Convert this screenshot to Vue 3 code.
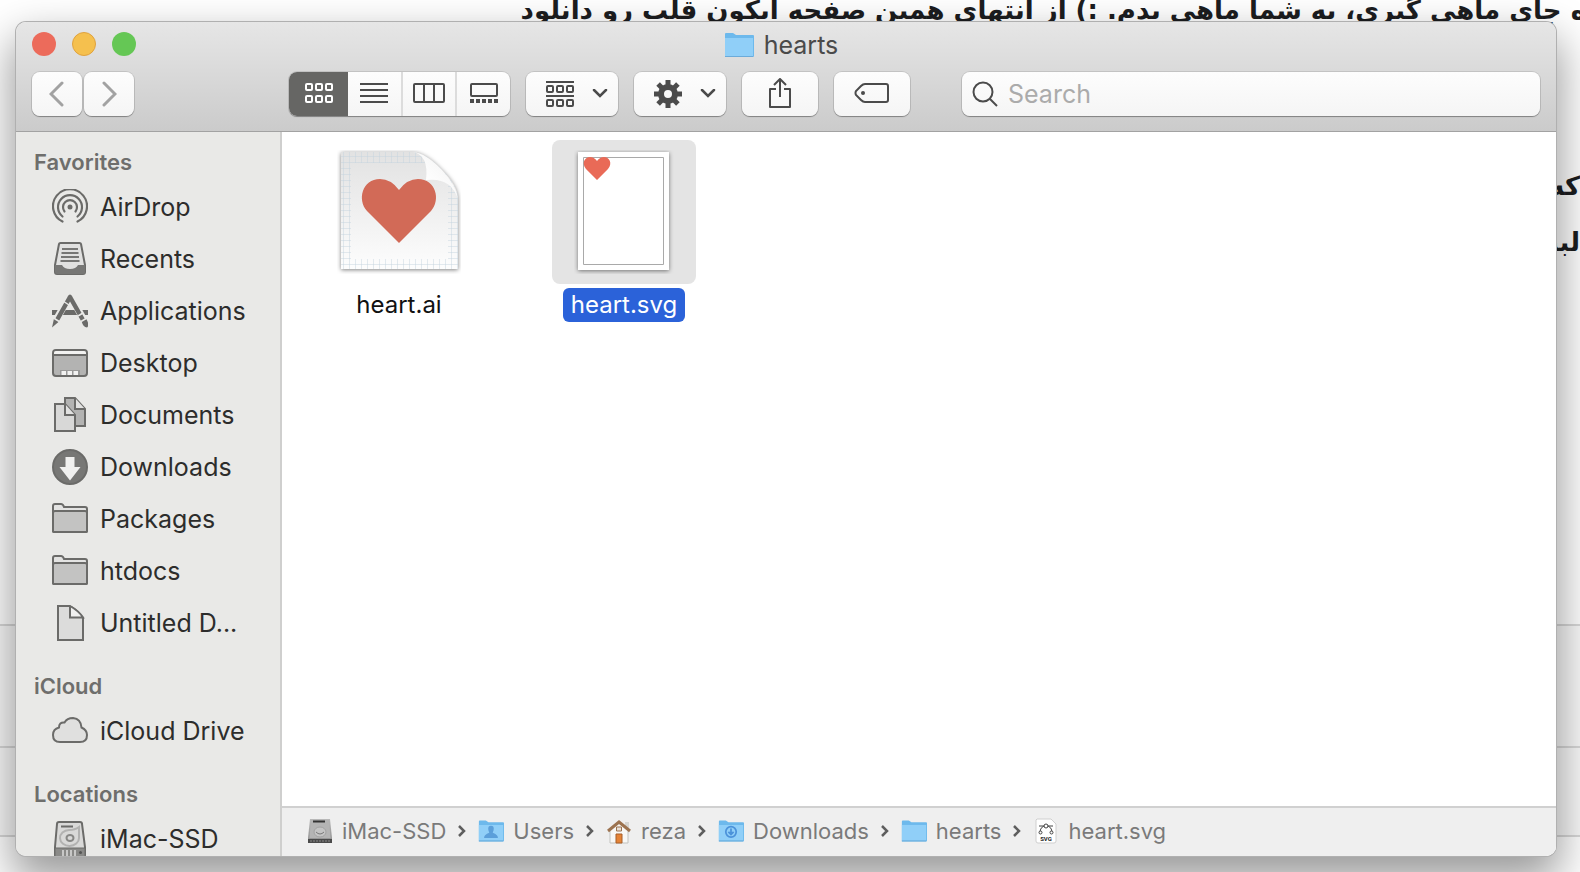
<script setup>
import { ref } from 'vue'

const query = ref('')
const view = ref('icons')

const views = [
  { id: 'icons', label: 'Icon view' },
  { id: 'list', label: 'List view' },
  { id: 'columns', label: 'Column view' },
  { id: 'gallery', label: 'Gallery view' },
]

const sections = [
  {
    title: 'Favorites',
    items: [
      { name: 'AirDrop', icon: 'airdrop' },
      { name: 'Recents', icon: 'recents' },
      { name: 'Applications', icon: 'applications' },
      { name: 'Desktop', icon: 'desktop' },
      { name: 'Documents', icon: 'documents' },
      { name: 'Downloads', icon: 'downloads' },
      { name: 'Packages', icon: 'folder' },
      { name: 'htdocs', icon: 'folder' },
      { name: 'Untitled D...', icon: 'file' },
    ],
  },
  { title: 'iCloud', items: [{ name: 'iCloud Drive', icon: 'cloud' }] },
  { title: 'Locations', items: [{ name: 'iMac-SSD', icon: 'disk' }] },
]

const path = [
  { name: 'iMac-SSD', icon: 'drive' },
  { name: 'Users', icon: 'users' },
  { name: 'reza', icon: 'home' },
  { name: 'Downloads', icon: 'down' },
  { name: 'hearts', icon: 'blue' },
  { name: 'heart.svg', icon: 'svgfile' },
]
</script>

<template>
  <svg class="defs" width="0" height="0" aria-hidden="true">
    <defs>
      <linearGradient id="paper" x1="0" y1="0" x2="0" y2="1">
        <stop offset="0" stop-color="#e2e2e2" /><stop offset="1" stop-color="#fdfdfd" />
      </linearGradient>
      <linearGradient id="curl" x1="0" y1="1" x2="1" y2="0">
        <stop offset="0" stop-color="#c8c8c8" /><stop offset=".3" stop-color="#ffffff" /><stop offset=".7" stop-color="#f7f7f7" /><stop offset="1" stop-color="#c4c4c4" />
      </linearGradient>
      <linearGradient id="metal" x1="0" y1="0" x2="0" y2="1">
        <stop offset="0" stop-color="#b9b9b9" /><stop offset="1" stop-color="#8e8e8e" />
      </linearGradient>
      <pattern id="grid" width="6" height="6" patternUnits="userSpaceOnUse">
        <path d="M0 .5H6M.5 0V6" stroke="#c3d3de" stroke-opacity=".45" fill="none" />
      </pattern>

      <symbol id="i-airdrop" viewBox="0 0 36 36">
        <g fill="none" stroke="#6b6b69" stroke-width="2.200" stroke-linecap="round">
          <path d="M10.500 32.500A17 17 0 1 1 25.500 32.500" />
          <path d="M10.500 27.500A12 12 0 1 1 25.500 27.500" />
          <path d="M12.500 22.500A7 7 0 1 1 23.500 22.500" />
        </g>
        <circle cx="18" cy="18" r="2.500" fill="#6b6b69" />
      </symbol>
      <symbol id="i-recents" viewBox="0 0 36 36">
        <path d="M7 3Q7.200 2 8.500 2H27.500Q28.800 2 29 3L33 24V31Q33 33 31 33H5Q3 33 3 31V24Z" fill="#e1e1e0" stroke="#6b6b69" stroke-width="2" stroke-linejoin="round" />
        <path d="M3 24H10Q12 28 18 28T26 24H33V32Q33 33 31 33H5Q3 33 3 31Z" fill="#777775" />
        <path d="M10 8H26M9.500 12H26.500M9 16H27M8.500 20H27.500" stroke="#777775" stroke-width="2" />
      </symbol>
      <symbol id="i-applications" viewBox="0 0 36 36">
        <path d="M0 17H36V22H0Z" fill="#6b6b69" />
        <path d="M17 4L3.500 28M19 4L32.500 28" stroke="#e9e9e7" stroke-width="7" />
        <path d="M18 4L5 27M18 4L31 27" stroke="#6b6b69" stroke-width="4.500" stroke-linecap="round" />
        <path d="M2 25.500L7 28.500L0 34.500ZM29.500 28L34 25.500Q38 32 35 34.500Q31 34 29.500 28Z" fill="#6b6b69" />
        <path d="M11 8L17 12M26 23L31 20M1.500 25L8 29M29 28.500L35 25" stroke="#e9e9e7" stroke-width="1.500" />
      </symbol>
      <symbol id="i-desktop" viewBox="0 0 36 36">
        <rect x="1" y="5" width="34" height="26" rx="3" fill="#b3b3b2" stroke="#6b6b69" stroke-width="2" />
        <path d="M2 8Q2 6 4 6H32Q34 6 34 8V9H2Z" fill="#f2f2f1" />
        <path d="M1 10H35" stroke="#6b6b69" stroke-width="2" />
        <path d="M8 25H28V30H8Z" fill="#999998" /><path d="M9.500 26H14V30H9.500ZM15.500 26H20V30H15.500ZM21.500 26H26V30H21.500Z" fill="#f2f2f1" />
      </symbol>
      <symbol id="i-documents" viewBox="0 0 36 36">
        <g stroke="#6b6b69" stroke-width="2">
          <path d="M13 1H23L33 12V29H13Z" fill="#b3b3b2" /><path d="M23 1V12H33" fill="#e2e2e1" />
          <path d="M3 7H13L23 18V34H3Z" fill="#d8d8d7" /><path d="M13 7V18H23" fill="#e2e2e1" />
        </g>
      </symbol>
      <symbol id="i-downloads" viewBox="0 0 36 36">
        <circle cx="18" cy="18" r="17" fill="#777775" stroke="#6b6b69" stroke-width="2" />
        <path d="M13.500 8H22.500V18H28.500L18 31.500L7.500 18H13.500Z" fill="#f0f0ef" />
      </symbol>
      <symbol id="i-folder" viewBox="0 0 36 36">
        <path d="M1 30V5Q1 3 3 3H9Q11 3 12 6H33Q35 6 35 8V30Q35 31 34 31H2Q1 31 1 30Z" fill="#e3e3e2" stroke="#6b6b69" stroke-width="2" />
        <path d="M1 12Q1 10 3 10H33Q35 10 35 12V30Q35 31 34 31H2Q1 31 1 30Z" fill="#c3c3c2" stroke="#6b6b69" stroke-width="2" />
      </symbol>
      <symbol id="i-file" viewBox="0 0 36 36">
        <path d="M6 1H17Q22 2 31 13V35H6Z" fill="#dcdcdb" stroke="#6b6b69" stroke-width="2" />
        <path d="M18 1V12.500H31Q27 6 18 1Z" fill="#f0f0ef" stroke="#6b6b69" stroke-width="2" />
      </symbol>
      <symbol id="i-cloud" viewBox="0 0 36 36">
        <path d="M8 29Q1 29 1 22Q1 16 7 14.500Q7 9 12.500 9.500Q15 5 21 5Q29 6 29.500 14.500Q35 17 35 22Q35 29 28 29Z" fill="#e0e0df" stroke="#6b6b69" stroke-width="2" />
      </symbol>
      <symbol id="i-disk" viewBox="0 0 36 36">
        <path d="M5 3Q5 1 7 1H28Q30 1 30 3L33 26V34Q33 36 31 36H5Q3 36 3 34V26Z" fill="#d9d9d8" stroke="#6b6b69" stroke-width="2" />
        <path d="M3 27H33V36H3Z" fill="#8a8a88" stroke="#6b6b69" stroke-width="1" />
        <path d="M9 5.500H21" stroke="#6b6b69" stroke-width="2" />
        <path d="M27 6V17A9.500 8 0 1 1 17 9Q23 9 27 6Z" fill="none" stroke="#b2b2b1" stroke-width="2" />
        <ellipse cx="18" cy="17" rx="3.500" ry="3" fill="none" stroke="#888886" stroke-width="2" />
        <path d="M11 29V35M15 29V35M19 29V35M23 29V35" stroke="#c8c8c7" stroke-width="2" /><circle cx="28.500" cy="31.500" r="1.500" fill="#555" />
      </symbol>

      <symbol id="i-blue" viewBox="0 0 30 26">
        <path d="M1 24V2Q1 1 2 1H9L12 3H29Q30 3 30 4V24Q30 25 29 25H1Z" fill="#6db9ec" />
        <path d="M1 6H29V24H1Z" fill="#90cff8" /><path d="M1 24.500H29" stroke="#6cabd9" />
      </symbol>
      <symbol id="i-users" viewBox="0 0 30 26">
        <use href="#i-blue" width="30" height="26" /><path d="M15 7Q19 7 18 12L17 15Q23 17 23 21H7Q7 17 13 15L12 12Q11 7 15 7Z" fill="#5b9fda" />
      </symbol>
      <symbol id="i-down" viewBox="0 0 30 26">
        <use href="#i-blue" width="30" height="26" /><g fill="none" stroke="#4b92da" stroke-width="2"><circle cx="15" cy="14" r="6" /><path d="M15 10V17M12 14L15 17L18 14" /></g>
      </symbol>
      <symbol id="i-home" viewBox="0 0 26 26">
        <path d="M19 4H23V11H19Z" fill="#d5d5d2" /><path d="M4 12L13 4L22 12V25H4Z" fill="#f8f8f6" stroke="#c2c2be" />
        <path d="M2 13L13 4L24 13" fill="none" stroke="#9c7350" stroke-width="3" /><path d="M10.500 9H15.500V13H10.500Z" fill="#e8e0d6" stroke="#9c7350" /><path d="M10 16H16V25H10Z" fill="#e58336" stroke="#a75f28" />
      </symbol>
      <symbol id="i-drive" viewBox="0 0 26 26">
        <path d="M3 1H23L25 20V25H1V20Z" fill="url(#metal)" /><path d="M4 2H22L23.500 20H2.500Z" fill="#b4b4b4" />
        <path d="M6 3.500H18" stroke="#333" stroke-width="2" /><ellipse cx="13" cy="14" rx="6" ry="5" fill="#c4c4c4" stroke="#a2a2a2" /><path d="M9 14Q13 18 17 14" stroke="#777" fill="none" />
        <path d="M1 21H25V25H1Z" fill="#4a4a4a" /><path d="M3 23H23" stroke="#888" stroke-dasharray="2 1" />
      </symbol>
      <symbol id="i-svgfile" viewBox="0 0 22 26">
        <path d="M2 1H16L21 6V23Q21 25 19 25H3Q1 25 1 23V2Z" fill="#fff" stroke="#cfcfcf" />
        <path d="M4 8H18M5 15Q5 8 11 8T17 15" stroke="#444" fill="none" /><circle cx="11" cy="8" r="2" fill="#fff" stroke="#444" /><circle cx="5.500" cy="14.500" r="1.500" fill="#fff" stroke="#444" /><circle cx="16.500" cy="14.500" r="1.500" fill="#fff" stroke="#444" />
        <text x="11" y="23" text-anchor="middle" font-family="Roboto, sans-serif" font-weight="700" font-size="6" fill="#222">SVG</text>
      </symbol>

      <symbol id="v-icons" viewBox="0 0 32 24">
        <g fill="none" stroke="currentColor" stroke-width="2">
          <rect x="3" y="2" width="6" height="6" rx="1" /><rect x="13" y="2" width="6" height="6" rx="1" /><rect x="23" y="2" width="6" height="6" rx="1" />
          <rect x="3" y="14" width="6" height="6" rx="1" /><rect x="13" y="14" width="6" height="6" rx="1" /><rect x="23" y="14" width="6" height="6" rx="1" />
        </g>
      </symbol>
      <symbol id="v-list" viewBox="0 0 32 24"><path d="M2 2H30M2 8H30M2 14H30M2 20H30" stroke="currentColor" stroke-width="2" /></symbol>
      <symbol id="v-columns" viewBox="0 0 32 24"><g fill="none" stroke="currentColor" stroke-width="2"><rect x="1" y="2" width="30" height="18" rx="1" /><path d="M11 2V20M21 2V20" /></g></symbol>
      <symbol id="v-gallery" viewBox="0 0 32 24"><rect x="3" y="2" width="26" height="12" rx="1" fill="none" stroke="currentColor" stroke-width="2" /><path d="M2 19H30" stroke="currentColor" stroke-width="4" stroke-dasharray="4 2" /></symbol>
      <symbol id="chev" viewBox="0 0 16 10"><path d="M2 1L8 7L14 1" fill="none" stroke="#4b4b4b" stroke-width="2.500" stroke-linecap="round" /></symbol>
    </defs>
  </svg>

  <div class="screen">
    <div class="page" lang="fa" dir="rtl">
      <p class="line first">ه جای ماهی گیری، به شما ماهی بدم. :) از انتهای همین صفحه آیکون قلب رو دانلود</p>
      <p class="line">که</p>
      <p class="line">لبنـ</p>
      <div class="rows"><div class="row tall"></div><div class="row"></div></div>
    </div>

    <main class="window">
      <header class="toolbar">
        <div class="titlebar">
          <div class="lights">
            <button class="light red" aria-label="Close"></button>
            <button class="light yellow" aria-label="Minimize"></button>
            <button class="light green" aria-label="Zoom"></button>
          </div>
          <h1 class="title"><svg width="30" height="26"><use href="#i-blue" /></svg>hearts</h1>
        </div>
        <div class="tools">
          <div class="nav">
            <button class="btn arrow" aria-label="Back"><svg width="16" height="26" viewBox="0 0 16 26"><path d="M13 2L2 13L13 24" /></svg></button>
            <button class="btn arrow" aria-label="Forward"><svg width="16" height="26" viewBox="0 0 16 26"><path d="M3 2L14 13L3 24" /></svg></button>
          </div>
          <div class="btn views">
            <button v-for="v in views" :key="v.id" class="view" :class="{ on: view === v.id }" :aria-label="v.label" :aria-pressed="view === v.id" @click="view = v.id">
              <svg width="32" height="24"><use :href="'#v-' + v.id" /></svg>
            </button>
          </div>
          <button class="btn menu" aria-label="Arrange">
            <svg width="32" height="30" viewBox="0 0 32 30">
              <g fill="none" stroke="#4b4b4b" stroke-width="2"><path d="M2 3H30M2 17H30" />
                <rect v-for="x in [3, 13, 23]" :key="x" :x="x" y="7" width="6" height="6" rx="1" /><rect v-for="x in [3, 13, 23]" :key="'b' + x" :x="x" y="21" width="6" height="6" rx="1" /></g>
            </svg>
            <svg width="16" height="10"><use href="#chev" /></svg>
          </button>
          <button class="btn menu" aria-label="Actions">
            <svg width="32" height="30" viewBox="-16 -15 32 30">
              <rect v-for="a in 8" :key="a" x="-2.500" y="-14" width="5" height="8" fill="#4b4b4b" :transform="`rotate(${a * 45})`" />
              <circle r="7" fill="none" stroke="#4b4b4b" stroke-width="6" />
            </svg>
            <svg width="16" height="10"><use href="#chev" /></svg>
          </button>
          <button class="btn single" aria-label="Share">
            <svg width="24" height="32" viewBox="0 0 24 32"><path d="M8 11H2V29H22V11H16M12 19V1M6 7L12 1L18 7" fill="none" stroke="#4b4b4b" stroke-width="2" stroke-linejoin="round" /></svg>
          </button>
          <button class="btn single" aria-label="Edit tags">
            <svg width="36" height="22" viewBox="0 0 36 22"><path d="M11 1H32Q34 1 34 3V17Q34 19 32 19H11Q9 19 7 17L2 12Q1 10 2 8L7 3Q9 1 11 1Z" fill="none" stroke="#4b4b4b" stroke-width="2" /><circle cx="9" cy="10" r="2" fill="#4b4b4b" /></svg>
          </button>
          <label class="btn search">
            <svg width="26" height="26" viewBox="0 0 26 26"><g fill="none" stroke="#4b4b4b" stroke-width="2"><circle cx="11" cy="11" r="9.500" /><path d="M18 18L25 25" /></g></svg>
            <input v-model="query" type="text" placeholder="Search" aria-label="Search" />
          </label>
        </div>
      </header>

      <div class="body">
        <nav class="sidebar" aria-label="Sidebar">
          <section v-for="s in sections" :key="s.title" class="group">
            <h2>{{ s.title }}</h2>
            <a v-for="i in s.items" :key="i.name" href="#" class="item"><svg width="36" height="36"><use :href="'#i-' + i.icon" /></svg>{{ i.name }}</a>
          </section>
        </nav>
        <div class="main">
          <div class="files">
            <figure class="file">
              <div class="thumb">
                <svg width="124" height="124" viewBox="0 0 124 124">
                  <path class="sheet" d="M4 2H76Q88 2 104 19Q121 35 121 49V119H4Z" fill="url(#paper)" />
                  <path d="M4 2H76Q88 2 104 19Q121 35 121 49V119H4ZM14 13V109H111V29H90V13Z" fill="url(#grid)" fill-rule="evenodd" />
                  <path d="M76 2Q92 5 89 30Q114 27 121 49Q119 35 104 19Q88 3 76 2Z" fill="url(#curl)" />
                  <path d="M62 93L30 61C20 50 25 29 43 29Q54 29 62 40Q70 29 81 29C99 29 104 50 94 61Z" fill="#d26a57" />
                </svg>
              </div>
              <figcaption>heart.ai</figcaption>
            </figure>
            <figure class="file selected">
              <div class="thumb">
                <svg width="100" height="124" viewBox="0 0 100 124">
                  <path class="sheet" d="M4 2H95V120H4Z" fill="#fff" /><path d="M9.500 7.500H89.500V114.500H9.500Z" fill="#fff" stroke="#a9a9a9" />
                  <path d="M23 30L12 19C7 13 11 7 16 7Q20 7 23 11Q26 7 30 7C35 7 39 13 34 19Z" fill="#e96a57" />
                </svg>
              </div>
              <figcaption>heart.svg</figcaption>
            </figure>
          </div>
          <footer class="path">
            <template v-for="(p, n) in path" :key="p.name">
              <svg v-if="n" class="sep" width="10" height="14" viewBox="0 0 10 14"><path d="M2 2L7 7L2 12" fill="none" stroke="#5e5e5e" stroke-width="2.500" /></svg>
              <a href="#" class="crumb"><svg width="26" height="26"><use :href="'#i-' + p.icon" /></svg>{{ p.name }}</a>
            </template>
          </footer>
        </div>
      </div>
    </main>
  </div>
</template>

<style>
body { margin: 0; }
</style>

<style scoped>
* { box-sizing: border-box; }
svg { display: block; flex: none; }
button { padding: 0; border: 0; background: none; font: inherit; }
a { color: inherit; text-decoration: none; }
.defs { position: absolute; }
.screen { display: grid; grid-template: minmax(0, 1fr) / minmax(0, 1fr); height: 100vh; overflow: hidden; background: #fff; font-family: Inter, "Liberation Sans", sans-serif; }
.page { grid-area: 1 / 1; display: flex; flex-direction: column; overflow: hidden; }
.line { margin: 0; height: 56px; flex: none; white-space: nowrap; font: 700 26px/56px "DejaVu Sans", sans-serif; color: #1c1d1f; }
.first { height: 176px; margin: -18px -6px 0 0; }
.rows { margin-top: 354px; border: solid #d9d9d9; border-width: 2px 0; background: #fafafa; }
.row { height: 87px; }
.tall { height: 122px; border-bottom: 2px solid #d9d9d9; }
.window { grid-area: 1 / 1; z-index: 1; display: flex; flex-direction: column; margin: 22px 24px 16px 16px; border-radius: 10px; overflow: hidden; background: #fff; box-shadow: 0 0 0 1px #b0b0b0, 0 20px 44px 4px rgba(0, 0, 0, .4); }
.toolbar { flex: none; padding: 0 16px 14px; border-bottom: 1px solid #a2a2a2; background: linear-gradient(#e6e6e6, #cbcbcb); }
.titlebar { display: grid; grid-template-columns: 1fr auto 1fr; align-items: center; height: 44px; margin-bottom: 6px; padding-right: 10px; }
.lights { display: flex; gap: 16px; }
.light { width: 24px; height: 24px; border-radius: 50%; }
.red { background: #ec6b5b; }
.yellow { background: #f5c04e; border: 1px solid #dfa23f; }
.green { background: #65c755; }
.title { display: flex; align-items: center; gap: 10px; margin: 0; padding-top: 2px; font-size: 25px; line-height: 30px; font-weight: 400; color: #4a4a4a; }
.tools { display: flex; gap: 16px; }
.nav { display: flex; gap: 2px; margin-right: 139px; }
.btn { height: 44px; flex: none; display: flex; align-items: center; justify-content: center; border-radius: 8px; background: linear-gradient(#fdfdfd, #f5f5f5); box-shadow: 0 0 0 1px rgba(0, 0, 0, .1), 0 1px 1px rgba(0, 0, 0, .3); }
.tools { padding-bottom: 1px; }
.arrow { width: 50px; }
.arrow path { fill: none; stroke: #a2a2a2; stroke-width: 3px; stroke-linecap: round; }
.views { width: 221px; overflow: hidden; color: #4b4b4b; }
.view { flex: 1; height: 44px; display: grid; place-items: center; color: inherit; border-right: 2px solid #dcdcdc; }
.view:last-child { border: 0; }
.view.on { flex: none; width: 59px; border: 0; background: #666664; color: #fff; }
.menu { width: 92px; gap: 16px; padding-left: 8px; }
.single { width: 76px; }
.search { flex: 1; min-width: 160px; margin-left: 36px; padding: 0 10px; gap: 10px; }
.search input { flex: 1; min-width: 0; padding: 0; border: 0; outline: 0; background: none; font: 400 25px/32px Inter, sans-serif; color: #333; }
.search input::placeholder { color: #ababab; opacity: 1; }
.body { flex: 1; min-height: 0; display: flex; }
.sidebar { flex: none; width: 266px; padding: 11px 18px 0; border-right: 2px solid #cfcfce; background: #e9e9e7; overflow: hidden; }
.group { margin-bottom: 18px; }
.group h2 { margin: 0; font-size: 22px; line-height: 38px; font-weight: 600; color: #6e6e6c; }
.item { display: flex; align-items: center; gap: 12px; height: 52px; padding-left: 18px; font-size: 25px; white-space: nowrap; color: #2d2d2c; }
.main { flex: 1; min-width: 0; display: flex; flex-direction: column; background: #fff; }
.files { flex: 1; min-height: 0; display: flex; align-items: flex-start; gap: 81px; padding: 8px 45px; }
.file { margin: 0; width: 144px; display: flex; flex-direction: column; align-items: center; gap: 4px; }
.thumb { width: 144px; height: 144px; display: grid; place-items: center; border-radius: 8px; }
.sheet { filter: drop-shadow(0 1px 2px rgba(0, 0, 0, .5)); }
.selected .thumb { background: #e4e4e4; }
figcaption { padding: 0 8px; border-radius: 6px; font-size: 24px; line-height: 34px; color: #111; }
.selected figcaption { background: #2b62d9; color: #fff; }
.path { flex: none; display: flex; align-items: center; height: 50px; padding: 0 25px 2px; border-top: 2px solid #d0d0d0; background: #efefef; font-size: 22px; color: #7a7a7a; }
.crumb { display: flex; align-items: center; gap: 9px; }
.sep { margin: 0 11px; }
</style>
